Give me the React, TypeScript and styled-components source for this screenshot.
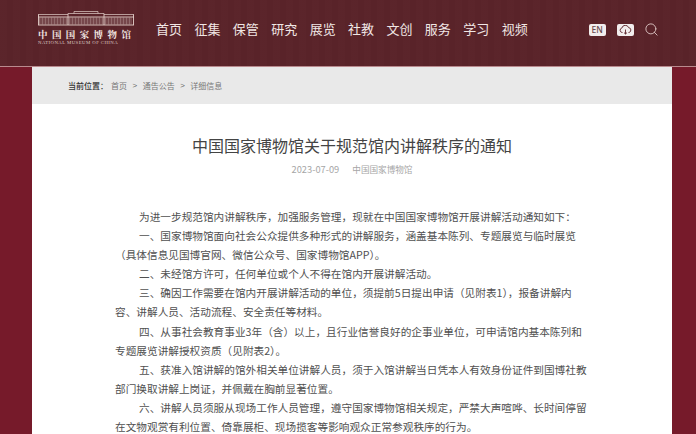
import React from "react";
import styled, { createGlobalStyle } from "styled-components";
import { Search } from "lucide-react";

const cjk = `"Noto Sans CJK SC", "Noto Sans", sans-serif`;
const navItems = ["首页", "征集", "保管", "研究", "展览", "社教", "文创", "服务", "学习", "视频"];
const crumbs = ["首页", "通告公告", "详细信息"];

const paragraphs = [
  "为进一步规范馆内讲解秩序，加强服务管理，现就在中国国家博物馆开展讲解活动通知如下：",
  "一、国家博物馆面向社会公众提供多种形式的讲解服务，涵盖基本陈列、专题展览与临时展览（具体信息见国博官网、微信公众号、国家博物馆APP）。",
  "二、未经馆方许可，任何单位或个人不得在馆内开展讲解活动。",
  "三、确因工作需要在馆内开展讲解活动的单位，须提前5日提出申请（见附表1），报备讲解内容、讲解人员、活动流程、安全责任等材料。",
  "四、从事社会教育事业3年（含）以上，且行业信誉良好的企事业单位，可申请馆内基本陈列和专题展览讲解授权资质（见附表2）。",
  "五、获准入馆讲解的馆外相关单位讲解人员，须于入馆讲解当日凭本人有效身份证件到国博社教部门换取讲解上岗证，并佩戴在胸前显著位置。",
  "六、讲解人员须服从现场工作人员管理，遵守国家博物馆相关规定，严禁大声喧哗、长时间停留在文物观赏有利位置、倚靠展柜、现场揽客等影响观众正常参观秩序的行为。",
];

const GlobalStyle = createGlobalStyle`
  html, body {
    margin: 0;
    padding: 0;
    height: 434px;
    overflow: hidden;
    background: #761a2a;
    font-family: ${cjk};
  }
`;

const Page = styled.div`
  width: 696px;
  height: 434px;
  overflow: hidden;
  background: #761a2a;
`;

const Header = styled.header`
  height: 67px;
  box-sizing: border-box;
  padding: 11px 38px 0;
  display: flex;
  align-items: flex-start;
  border-bottom: 1px solid #b98a8e;
  background:
    repeating-linear-gradient(90deg, rgba(255, 255, 255, 0.006) 0 7px, rgba(0, 0, 0, 0.012) 7px 13px),
    #5a2329;
`;

const Logo = styled.div`
  width: 96px;
  display: flex;
  flex-direction: column;
  color: #eddcd6;
`;

const MarkSvg = styled.svg`
  display: block;
`;

const LogoName = styled.div`
  margin-top: 2px;
  font-family: "Noto Serif CJK SC", ${cjk};
  font-size: 9.5px;
  line-height: 12px;
  font-weight: 700;
  letter-spacing: 4.4px;
  white-space: nowrap;
  color: #f3e7e2;
`;

const LogoLatin = styled.div`
  font-family: "Liberation Serif", serif;
  font-size: 4.8px;
  line-height: 6px;
  letter-spacing: 0.42px;
  white-space: nowrap;
  color: #dcc6c1;
`;

const Nav = styled.nav`
  margin-left: 22px;
  margin-top: 8px;
  display: flex;
  gap: 12.4px;
`;

const NavLink = styled.a`
  font-size: 13px;
  line-height: 19px;
  color: #f1e7e5;
  white-space: nowrap;
`;

const Tools = styled.div`
  margin-left: 61px;
  margin-top: 11px;
  display: flex;
  align-items: center;
  gap: 11px;
`;

const Chip = styled.span`
  width: 17px;
  height: 12px;
  border-radius: 2px;
  background: #f2eded;
  color: #6b4a4d;
  font-family: "Noto Sans", sans-serif;
  font-size: 8.5px;
  font-weight: 500;
  line-height: 12px;
  display: flex;
  align-items: center;
  justify-content: center;
`;

const SearchIcon = styled(Search)`
  width: 15px;
  height: 15px;
  margin-left: -1px;
  color: #e2cdca;
`;

const Card = styled.main`
  width: 640px;
  margin-left: 32px;
  background: #fff;
  height: 367px;
  overflow: hidden;
`;

const Breadcrumb = styled.div`
  height: 37px;
  padding-left: 36px;
  display: flex;
  align-items: center;
  gap: 5.5px;
  background: #e9e9e9;
  font-size: 8px;
  color: #777;
`;

const CrumbLabel = styled.span`
  margin-right: -2.5px;
  color: #333;
  font-weight: 500;
`;

const CrumbSep = styled.span`
  font-family: "Liberation Sans", sans-serif;
  font-size: 8px;
  color: #666;
`;

const Title = styled.h1`
  margin: 29px 0 0;
  font-size: 16px;
  line-height: 24px;
  font-weight: 400;
  color: #444;
  text-align: center;
`;

const Meta = styled.div`
  margin-top: 6px;
  display: flex;
  justify-content: center;
  align-items: center;
  gap: 13px;
  font-size: 8.6px;
  line-height: 12px;
  color: #a6a6a6;
`;

const MetaDate = styled.span`
  font-size: 9.3px;
`;

const Article = styled.article`
  margin: 32px 0 0 83px;
  width: 474px;
`;

const Para = styled.p`
  margin: 0;
  font-size: 10.67px;
  line-height: 19.1px;
  color: #505050;
  text-indent: 24px;
`;

function MuseumMark() {
  const columns = Array.from({ length: 62 }, (_, i) => i * 1.5 + 1.5);
  return (
    <MarkSvg width="96" height="15" viewBox="0 0 96 15" fill="none" stroke="#e3d0ca">
      <path d="M0 3.5H30M66 3.5H96M30 2.5H66M36 0.5H60M36 0.5V2.5M60 0.5V2.5" strokeWidth="0.7" />
      <path d="M0 14H96M0 6H96" strokeWidth="0.9" />
      <path d="M0.5 3.5V14M95.5 3.5V14M30 2.5V14M66 2.5V14" strokeWidth="0.9" />
      {columns.map((x) => (
        <path key={x} d={`M${x} 6.5V13.5`} strokeWidth="0.6" opacity="0.7" />
      ))}
    </MarkSvg>
  );
}

function CloudIcon() {
  return (
    <svg width="13" height="10" viewBox="0 0 13 10" fill="none" stroke="#5a2329" strokeWidth="0.9">
      <path d="M3.5 7.5H3A2.3 2.3 0 0 1 2.9 3 3.5 3.5 0 0 1 9.6 2.6 2.5 2.5 0 0 1 10 7.5H9.5" />
      <path d="M6.5 4.5V9M5 7.6 6.5 9 8 7.6" />
    </svg>
  );
}

export default function App() {
  return (
    <Page>
      <GlobalStyle />
      <Header>
        <Logo>
          <MuseumMark />
          <LogoName>中国国家博物馆</LogoName>
          <LogoLatin>NATIONAL MUSEUM OF CHINA</LogoLatin>
        </Logo>
        <Nav>
          {navItems.map((item) => (
            <NavLink key={item}>{item}</NavLink>
          ))}
        </Nav>
        <Tools>
          <Chip>EN</Chip>
          <Chip>
            <CloudIcon />
          </Chip>
          <SearchIcon strokeWidth={1.4} />
        </Tools>
      </Header>
      <Card>
        <Breadcrumb>
          <CrumbLabel>当前位置：</CrumbLabel>
          {crumbs.map((crumb, i) => (
            <React.Fragment key={crumb}>
              {i > 0 && <CrumbSep>&gt;</CrumbSep>}
              <span>{crumb}</span>
            </React.Fragment>
          ))}
        </Breadcrumb>
        <Title>中国国家博物馆关于规范馆内讲解秩序的通知</Title>
        <Meta>
          <MetaDate>2023-07-09</MetaDate>
          <span>中国国家博物馆</span>
        </Meta>
        <Article>
          {paragraphs.map((text) => (
            <Para key={text}>{text}</Para>
          ))}
        </Article>
      </Card>
    </Page>
  );
}
